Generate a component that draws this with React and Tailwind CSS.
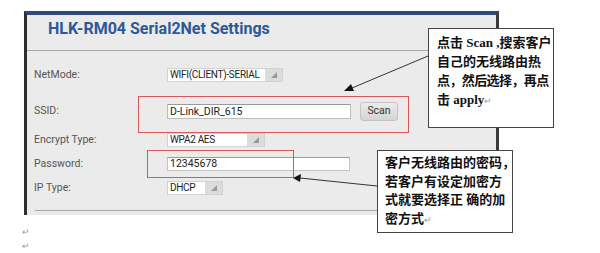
import React from "react";

function Tri() {
  return (
    <svg width="6" height="6" viewBox="0 0 6 6">
      <polygon points="6,0 6,6 0,6" fill="#9a9a9a" />
    </svg>
  );
}

function Select({ value, w }) {
  return (
    <div className={`flex h-[14px] border border-[#d2d2d2] bg-white ${w}`}>
      <div className="flex-1 pl-[2px] text-[10px] leading-[12px] tracking-[-0.3px] text-[#222] whitespace-nowrap">
        {value}
      </div>
      <div className="w-[17px] bg-[#dcdcdc] flex items-center justify-center">
        <Tri />
      </div>
    </div>
  );
}

function Row({ label, children, mt }) {
  return (
    <div className={`flex items-center h-[20px] pl-[7px] ${mt}`}>
      <div className="w-[133px] text-[10.5px] text-[#555] whitespace-nowrap">{label}</div>
      <div className="flex items-center">{children}</div>
    </div>
  );
}

export default function App() {
  const cjk = { fontFamily: '"Liberation Serif", "Noto Sans CJK SC", serif' };
  return (
    <div
      className="relative w-[600px] h-[253px] bg-white overflow-hidden"
      style={{ fontFamily: 'Roboto, "Liberation Sans", sans-serif' }}
    >
      <div className="ml-[24px] mt-[11px] w-[475px] h-[204px] bg-[#ebebeb] border-l-[3px] border-l-[#2e2e2e] border-t-4 border-t-[#2d4a78] border-r-[3px] border-r-[#3a3a3a] flex flex-col">
        <div className="h-[36px] border-b border-[#a8a8a8] pl-[21px] pt-[4px]">
          <div className="text-[16px] leading-[20px] font-bold text-[#2c5899]">
            HLK-RM04 Serial2Net Settings
          </div>
        </div>

        <Row label="NetMode:" mt="mt-[14px]">
          <Select value="WIFI(CLIENT)-SERIAL" w="w-[116px]" />
        </Row>

        <Row label="SSID:" mt="mt-[16px]">
          <div className="w-[184px] h-[15px] bg-white border border-[#bdbdbd] border-t-[#9a9a9a] pl-[2px] text-[10.5px] leading-[13px] text-[#222]">
            D-Link_DIR_615
          </div>
          <div className="ml-[9px] w-[38px] h-[19px] rounded-[3px] border border-[#c4c4c4] bg-gradient-to-b from-[#ececec] to-[#d4d4d4] flex items-center justify-center text-[10.5px] text-[#333]">
            Scan
          </div>
        </Row>

        <Row label="Encrypt Type:" mt="mt-[9px]">
          <Select value="WPA2 AES" w="w-[98px]" />
        </Row>

        <Row label="Password:" mt="mt-[4px]">
          <div className="w-[183px] h-[14px] bg-white border border-[#c4c4c4] border-t-[#9a9a9a] pl-[2px] text-[10.5px] leading-[12px] text-[#222]">
            12345678
          </div>
        </Row>

        <Row label="IP Type:" mt="mt-[4px]">
          <Select value="DHCP" w="w-[56px]" />
        </Row>

        <div className="mt-[12px] ml-[8px] border-t border-[#a8a8a8]" />
      </div>

      <div className="pl-[22px] mt-[10px] text-[9px] leading-[14px] text-[#999]">
        <div>↵</div>
        <div>↵</div>
      </div>

      {/* annotation red boxes */}
      <div className="absolute left-[138px] top-[96px] w-[271px] h-[37px] border border-[#d9585b]" />
      <div className="absolute left-[147px] top-[150px] w-[147px] h-[28px] border border-[#d9585b]" />

      {/* arrows */}
      <svg className="absolute left-0 top-0 pointer-events-none" width="600" height="253">
        <line x1="428" y1="56" x2="352" y2="88" stroke="#333" strokeWidth="1" />
        <polygon points="344,91 351,84 354,91" fill="#111" />
        <line x1="377" y1="186" x2="300" y2="178" stroke="#333" strokeWidth="1" />
        <polygon points="293,178 301,174 300,182" fill="#111" />
      </svg>

      {/* callout 1 */}
      <div
        className="absolute left-[428px] top-[28px] w-[126px] h-[100px] bg-white border border-[#444] pl-[8px] pt-[4px] text-[13px] leading-[19px] font-bold text-[#111] whitespace-nowrap"
        style={cjk}
      >
        <div>点击 Scan ,搜索客户</div>
        <div>自己的无线路由热</div>
        <div className="tracking-[-0.6px]">点，然后选择，再点</div>
        <div>
          击 apply<span className="text-[9px] font-normal text-[#999]">↵</span>
        </div>
      </div>

      {/* callout 2 */}
      <div
        className="absolute left-[377px] top-[150px] w-[136px] h-[83px] bg-white border border-[#444] pl-[7px] pt-[3px] text-[13px] leading-[18.5px] font-bold text-[#111] whitespace-nowrap"
        style={cjk}
      >
        <div>客户无线路由的密码，</div>
        <div>若客户有设定加密方</div>
        <div>式就要选择正 确的加</div>
        <div>
          密方式<span className="text-[9px] font-normal text-[#999]">↵</span>
        </div>
      </div>
    </div>
  );
}
